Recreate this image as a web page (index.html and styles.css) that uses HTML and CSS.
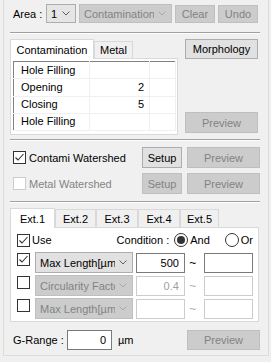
FILE: index.html
```html
<!DOCTYPE html>
<html lang="en">
<head>
    <meta charset="UTF-8">
    <title>Contamination Settings</title>
    <link rel="stylesheet" href="styles.css">
</head>
<body>
    <div class="panel">
        <div class="toolbar">
            <span class="lbl">Area :</span>
            <div class="combo area"><span class="combo-text">1</span>
                <svg class="chev" width="8" height="5" viewBox="0 0 8 5"><polyline points="0.5,0.5 4,4 7.5,0.5" /></svg>
            </div>
            <div class="combo dis kind"><span class="combo-text">Contamination</span>
                <svg class="chev" width="8" height="5" viewBox="0 0 8 5"><polyline points="0.5,0.5 4,4 7.5,0.5" /></svg>
            </div>
            <button class="btn dis small">Clear</button>
            <button class="btn dis small">Undo</button>
        </div>

        <div class="sep top-sep"></div>

        <div class="morph">
            <div class="morph-tabs">
                <div class="tabstrip">
                    <div class="tab active wide">Contamination</div>
                    <div class="tab">Metal</div>
                </div>
                <div class="tabpage morph-page">
                    <table class="grid">
                        <tr><td>Hole Filling</td><td class="num"></td><td></td></tr>
                        <tr><td>Opening</td><td class="num">2</td><td></td></tr>
                        <tr><td>Closing</td><td class="num">5</td><td></td></tr>
                        <tr><td>Hole Filling</td><td class="num"></td><td></td></tr>
                    </table>
                </div>
            </div>
            <div class="side">
                <button class="btn wide-btn morph-btn">Morphology</button>
                <button class="btn dis wide-btn preview-btn">Preview</button>
            </div>
        </div>

        <div class="sep"></div>

        <div class="ws-row">
            <span class="check on"><svg width="11" height="11" viewBox="0 0 11 11"><polyline points="1.5,5.5 4,8 9.5,2" /></svg></span>
            <span class="ws-label">Contami Watershed</span>
            <button class="btn setup">Setup</button>
            <button class="btn dis wide-btn">Preview</button>
        </div>
        <div class="ws-row second">
            <span class="check off-dis"></span>
            <span class="ws-label muted">Metal Watershed</span>
            <button class="btn dis setup">Setup</button>
            <button class="btn dis wide-btn">Preview</button>
        </div>

        <div class="sep"></div>

        <div class="ext">
            <div class="tabstrip ext-strip">
                <div class="tab active e1">Ext.1</div>
                <div class="tab e2">Ext.2</div>
                <div class="tab e3">Ext.3</div>
                <div class="tab e4">Ext.4</div>
                <div class="tab e5">Ext.5</div>
            </div>
            <div class="tabpage ext-page">
                <div class="use-row">
                    <span class="check on"><svg width="11" height="11" viewBox="0 0 11 11"><polyline points="1.5,5.5 4,8 9.5,2" /></svg></span>
                    <span class="use-label">Use</span>
                    <span class="cond-label">Condition :</span>
                    <span class="radio on"></span>
                    <span class="radio-label">And</span>
                    <span class="radio or"></span>
                    <span class="radio-label">Or</span>
                </div>

                <div class="filter-row">
                    <span class="check on"><svg width="11" height="11" viewBox="0 0 11 11"><polyline points="1.5,5.5 4,8 9.5,2" /></svg></span>
                    <div class="combo param"><span class="combo-text">Max Length[µm]</span>
                        <svg class="chev" width="8" height="5" viewBox="0 0 8 5"><polyline points="0.5,0.5 4,4 7.5,0.5" /></svg>
                    </div>
                    <div class="field">500</div>
                    <span class="tilde">~</span>
                    <div class="field"></div>
                </div>
                <div class="filter-row">
                    <span class="check"></span>
                    <div class="combo dis param"><span class="combo-text">Circularity Factor</span>
                        <svg class="chev" width="8" height="5" viewBox="0 0 8 5"><polyline points="0.5,0.5 4,4 7.5,0.5" /></svg>
                    </div>
                    <div class="field dis">0.4</div>
                    <span class="tilde dis">~</span>
                    <div class="field dis"></div>
                </div>
                <div class="filter-row">
                    <span class="check"></span>
                    <div class="combo dis param"><span class="combo-text">Max Length[µm]</span>
                        <svg class="chev" width="8" height="5" viewBox="0 0 8 5"><polyline points="0.5,0.5 4,4 7.5,0.5" /></svg>
                    </div>
                    <div class="field dis"></div>
                    <span class="tilde dis">~</span>
                    <div class="field dis"></div>
                </div>
            </div>
        </div>

        <div class="grange">
            <span class="lbl">G-Range :</span>
            <div class="field grange-field">0</div>
            <span class="unit">µm</span>
            <button class="btn dis wide-btn">Preview</button>
        </div>
    </div>
</body>
</html>
```

FILE: styles.css
```css
* {
    margin: 0;
    padding: 0;
    box-sizing: border-box;
}
body {
    background: #f0f0f0;
    font-family: "Liberation Sans", Arial, sans-serif;
    font-size: 11px;
    color: #000;
    width: 271px;
    height: 362px;
    overflow: hidden;
}

.panel {
    margin-left: 3px;
    width: 266px;
    height: 356px;
    border: 1px solid #dcdcdc;
    border-top: none;
    padding: 4px 8px 0 6px;
}

/* top toolbar */
.toolbar {
    display: flex;
    align-items: flex-end;
    height: 19px;
}
.toolbar .lbl {
    padding-left: 3px;
    width: 36px;
    align-self: center;
}
.combo {
    display: flex;
    align-items: center;
    height: 19px;
    background: #e5e5e5;
    border: 1px solid #adadad;
    padding: 0 5px 0 4px;
    overflow: hidden;
}
.combo-text {
    flex: 1;
    white-space: nowrap;
    overflow: hidden;
}
.chev {
    flex: none;
    margin-left: 4px;
    fill: none;
    stroke: #606060;
    stroke-width: 1;
}
.combo.area {
    width: 30px;
}
.combo.kind {
    width: 93px;
    margin-left: 3px;
}
.combo.dis {
    background: #cccccc;
    border-color: #bfbfbf;
    color: #838383;
}
.combo.dis .chev {
    stroke: #a8a8a8;
}

.btn {
    font-family: inherit;
    font-size: 11px;
    color: #000;
    background: #e1e1e1;
    border: 1px solid #adadad;
    height: 21px;
    flex: none;
}
.btn.dis {
    background: #cccccc;
    border-color: #bfbfbf;
    color: #838383;
}
.btn.small {
    width: 40px;
    height: 18px;
    margin-left: 3px;
}
.wide-btn {
    width: 73px;
}

.sep {
    height: 2px;
    border-top: 1px solid #a0a0a0;
    border-bottom: 1px solid #fff;
    margin-top: 4px;
}
.sep.top-sep {
    margin-top: 9px;
}

/* morphology block */
.morph {
    display: flex;
    margin-top: 5px;
}
.morph-tabs {
    width: 168px;
}
.tabstrip {
    display: flex;
    align-items: flex-end;
    height: 19px;
    position: relative;
    z-index: 1;
}
.tab {
    height: 17px;
    padding: 0 5px;
    background: #f0f0f0;
    border: 1px solid #d9d9d9;
    border-bottom: none;
    display: flex;
    align-items: center;
    justify-content: center;
}
.tab.active {
    height: 20px;
    margin-bottom: -1px;
    background: #fff;
    padding: 0 7px;
}
.tab.wide {
    width: 84px;
}
.tabpage {
    background: #fff;
    border: 1px solid #d9d9d9;
    padding: 2px;
}
.morph-page {
    height: 77px;
    overflow: hidden;
}
.grid {
    width: 163px;
    height: 70px;
    border: 1px solid #828282;
    border-collapse: collapse;
    table-layout: fixed;
}
.grid td {
    border-right: 1px solid #f0f0f0;
    border-bottom: 1px solid #f0f0f0;
    padding: 0 0 0 7px;
    white-space: nowrap;
    line-height: 15px;
}
.grid td:first-child {
    width: 76px;
}
.grid td.num {
    width: 60px;
    text-align: right;
    padding: 0 5px 0 0;
}
.side {
    display: flex;
    flex-direction: column;
    justify-content: space-between;
    margin-left: 7px;
    padding-bottom: 2px;
}
.morph-btn {
    height: 20px;
}

/* watershed rows */
.ws-row {
    display: flex;
    align-items: center;
    height: 21px;
    padding-left: 3px;
}
.sep + .ws-row {
    margin-top: 6px;
}
.ws-row.second {
    margin-top: 5px;
}
.ws-label {
    flex: 1;
    margin-left: 3px;
}
.muted {
    color: #838383;
}
.setup {
    width: 40px;
    margin-right: 5px;
}
.ws-row + .sep {
    margin-top: 7px;
}

.check {
    flex: none;
    width: 13px;
    height: 13px;
    border: 1px solid #333;
    background: #fff;
    display: flex;
    align-items: center;
    justify-content: center;
}
.check svg {
    fill: none;
    stroke: #333;
    stroke-width: 1.1;
}
.check.off-dis {
    border-color: #cccccc;
}

/* ext tabs */
.ext {
    margin-top: 5px;
}
.ext-strip .tab {
    padding: 0;
}
.tab.e1 { width: 45px; }
.tab.e2 { width: 41px; }
.tab.e3 { width: 42px; }
.tab.e4 { width: 42px; }
.tab.e5 { width: 39px; }
.ext-strip .tab:not(.active) {
    height: 18px;
}
.ext-page {
    width: 249px;
    padding: 5px 5px 2px 6px;
}
.use-row {
    display: flex;
    align-items: center;
    height: 14px;
}
.use-label {
    margin-left: 2px;
}
.cond-label {
    margin-left: auto;
}
.radio {
    width: 14px;
    height: 14px;
    border: 1px solid #333;
    border-radius: 50%;
    background: #fff;
    margin-left: 5px;
    display: flex;
    align-items: center;
    justify-content: center;
}
.radio.on::after {
    content: "";
    width: 8px;
    height: 8px;
    border-radius: 50%;
    background: #333;
}
.radio.or {
    margin-left: 15px;
}
.radio-label {
    margin-left: 2px;
}

.filter-row {
    display: flex;
    align-items: center;
    height: 21px;
    margin-top: 2px;
}
.use-row + .filter-row {
    margin-top: 5px;
}
.filter-row .check {
    align-self: flex-start;
    margin-top: 1px;
}
.combo.param {
    width: 99px;
    height: 21px;
    margin-left: 5px;
    background: #e1e1e1;
}
.combo.param.dis {
    background: #cccccc;
}
.field {
    width: 50px;
    height: 20px;
    background: #fff;
    border: 1px solid #7a7a7a;
    text-align: right;
    padding: 0 5px;
    line-height: 18px;
    margin-left: 3px;
}
.field.dis {
    border-color: #cccccc;
    color: #a0a0a0;
}
.tilde {
    width: 16px;
    text-align: center;
    font-size: 12px;
}
.tilde.dis {
    color: #b0b0b0;
}

/* g-range */
.grange {
    display: flex;
    align-items: center;
    margin-top: 7px;
    height: 21px;
    padding-left: 3px;
}
.grange .lbl {
    width: 54px;
}
.grange-field {
    width: 45px;
    margin-left: 0;
}
.unit {
    margin-left: 6px;
}
.grange .btn {
    margin-left: auto;
    height: 20px;
}
```
